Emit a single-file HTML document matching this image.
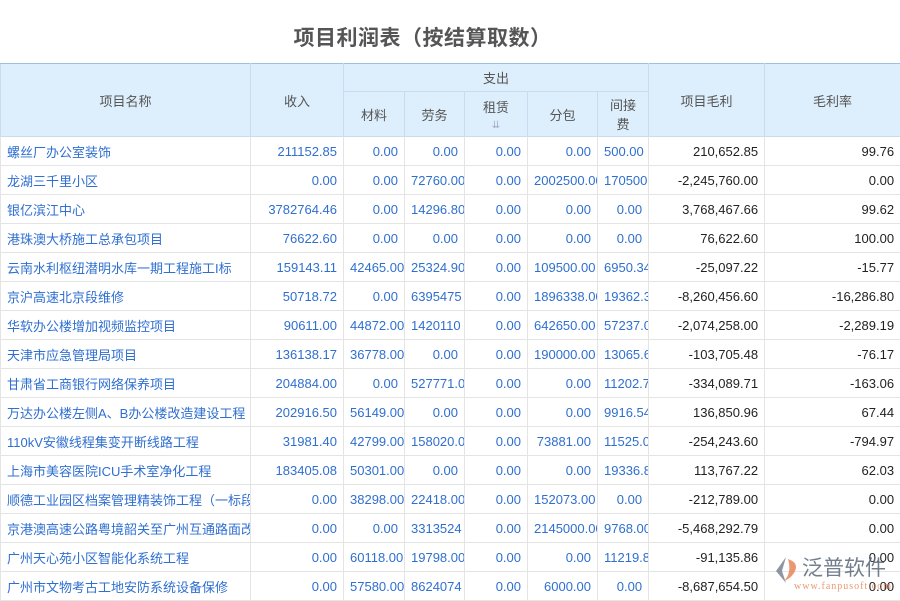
<!DOCTYPE html><html><head><meta charset="utf-8"><style>
body{margin:0;width:900px;height:600px;overflow:hidden;background:#fff;font-family:"Liberation Sans","Noto Sans CJK SC",sans-serif}
h1{position:absolute;left:0;top:22px;width:845px;margin:0;text-align:center;font-size:21px;font-weight:bold;color:#555;letter-spacing:0.5px}
table{position:absolute;left:0;top:63px;border-collapse:collapse;table-layout:fixed;width:900px;font-size:13px}
th{background:#ddeefc;color:#555;font-weight:normal;border:1px solid #c8dcef;border-top:none;padding:0}
tr.h1 th{border-top:1px solid #9cc0e0}
td{height:28px;border:1px solid #e4e4e4;padding:0 6px;white-space:nowrap;overflow:hidden;text-align:right;color:#2f6fd0}
td:first-child{text-align:left;text-overflow:clip}
td.k{color:#222}
</style></head><body>
<h1>项目利润表（按结算取数）</h1>
<table>
<colgroup><col style="width:250px"><col style="width:93px"><col style="width:61px"><col style="width:60px"><col style="width:63px"><col style="width:70px"><col style="width:51px"><col style="width:116px"><col style="width:136px"></colgroup>
<tr class="h1" style="height:28px"><th rowspan="2">项目名称</th><th rowspan="2">收入</th><th colspan="5">支出</th><th rowspan="2">项目毛利</th><th rowspan="2">毛利率</th></tr>
<tr style="height:45px"><th>材料</th><th>劳务</th><th>租赁<br><span style="color:#aac;font-size:10px">⇊</span></th><th>分包</th><th>间接<br>费</th></tr>
<tr><td>螺丝厂办公室装饰</td><td>211152.85</td><td>0.00</td><td>0.00</td><td>0.00</td><td>0.00</td><td>500.00</td><td class="k">210,652.85</td><td class="k">99.76</td></tr>
<tr><td>龙湖三千里小区</td><td>0.00</td><td>0.00</td><td>72760.00</td><td>0.00</td><td>2002500.00</td><td>170500</td><td class="k">-2,245,760.00</td><td class="k">0.00</td></tr>
<tr><td>银亿滨江中心</td><td>3782764.46</td><td>0.00</td><td>14296.80</td><td>0.00</td><td>0.00</td><td>0.00</td><td class="k">3,768,467.66</td><td class="k">99.62</td></tr>
<tr><td>港珠澳大桥施工总承包项目</td><td>76622.60</td><td>0.00</td><td>0.00</td><td>0.00</td><td>0.00</td><td>0.00</td><td class="k">76,622.60</td><td class="k">100.00</td></tr>
<tr><td>云南水利枢纽潜明水库一期工程施工I标</td><td>159143.11</td><td>42465.00</td><td>25324.90</td><td>0.00</td><td>109500.00</td><td>6950.34</td><td class="k">-25,097.22</td><td class="k">-15.77</td></tr>
<tr><td>京沪高速北京段维修</td><td>50718.72</td><td>0.00</td><td>6395475</td><td>0.00</td><td>1896338.00</td><td>19362.30</td><td class="k">-8,260,456.60</td><td class="k">-16,286.80</td></tr>
<tr><td>华软办公楼增加视频监控项目</td><td>90611.00</td><td>44872.00</td><td>1420110</td><td>0.00</td><td>642650.00</td><td>57237.00</td><td class="k">-2,074,258.00</td><td class="k">-2,289.19</td></tr>
<tr><td>天津市应急管理局项目</td><td>136138.17</td><td>36778.00</td><td>0.00</td><td>0.00</td><td>190000.00</td><td>13065.60</td><td class="k">-103,705.48</td><td class="k">-76.17</td></tr>
<tr><td>甘肃省工商银行网络保养项目</td><td>204884.00</td><td>0.00</td><td>527771.00</td><td>0.00</td><td>0.00</td><td>11202.70</td><td class="k">-334,089.71</td><td class="k">-163.06</td></tr>
<tr><td>万达办公楼左侧A、B办公楼改造建设工程</td><td>202916.50</td><td>56149.00</td><td>0.00</td><td>0.00</td><td>0.00</td><td>9916.54</td><td class="k">136,850.96</td><td class="k">67.44</td></tr>
<tr><td>110kV安徽线程集变开断线路工程</td><td>31981.40</td><td>42799.00</td><td>158020.00</td><td>0.00</td><td>73881.00</td><td>11525.00</td><td class="k">-254,243.60</td><td class="k">-794.97</td></tr>
<tr><td>上海市美容医院ICU手术室净化工程</td><td>183405.08</td><td>50301.00</td><td>0.00</td><td>0.00</td><td>0.00</td><td>19336.80</td><td class="k">113,767.22</td><td class="k">62.03</td></tr>
<tr><td>顺德工业园区档案管理精装饰工程（一标段）</td><td>0.00</td><td>38298.00</td><td>22418.00</td><td>0.00</td><td>152073.00</td><td>0.00</td><td class="k">-212,789.00</td><td class="k">0.00</td></tr>
<tr><td>京港澳高速公路粤境韶关至广州互通路面改造</td><td>0.00</td><td>0.00</td><td>3313524</td><td>0.00</td><td>2145000.00</td><td>9768.00</td><td class="k">-5,468,292.79</td><td class="k">0.00</td></tr>
<tr><td>广州天心苑小区智能化系统工程</td><td>0.00</td><td>60118.00</td><td>19798.00</td><td>0.00</td><td>0.00</td><td>11219.80</td><td class="k">-91,135.86</td><td class="k">0.00</td></tr>
<tr><td>广州市文物考古工地安防系统设备保修</td><td>0.00</td><td>57580.00</td><td>8624074</td><td>0.00</td><td>6000.00</td><td>0.00</td><td class="k">-8,687,654.50</td><td class="k">0.00</td></tr>
</table>
<div style="position:absolute;left:770px;top:553px;width:130px;height:45px;opacity:.85;white-space:nowrap">
<svg width="30" height="30" viewBox="0 0 30 30" style="position:absolute;left:2px;top:2px"><path d="M14 2 L4 16 L14 28 L10 16 Z" fill="#7a8694"/><path d="M16 4 Q28 8 22 18 Q18 24 12 26 Q20 18 16 4Z" fill="#e8875a"/></svg>
<div style="position:absolute;left:32px;top:0;font-size:21px;color:#5a6878;font-family:'Noto Sans CJK SC',sans-serif;line-height:28px">泛普软件</div>
<div style="position:absolute;left:24px;top:28px;font-size:10px;color:#e8875a;font-family:'Liberation Serif',serif;letter-spacing:1px">www.fanpusoft.com</div>
</div>
</body></html>
